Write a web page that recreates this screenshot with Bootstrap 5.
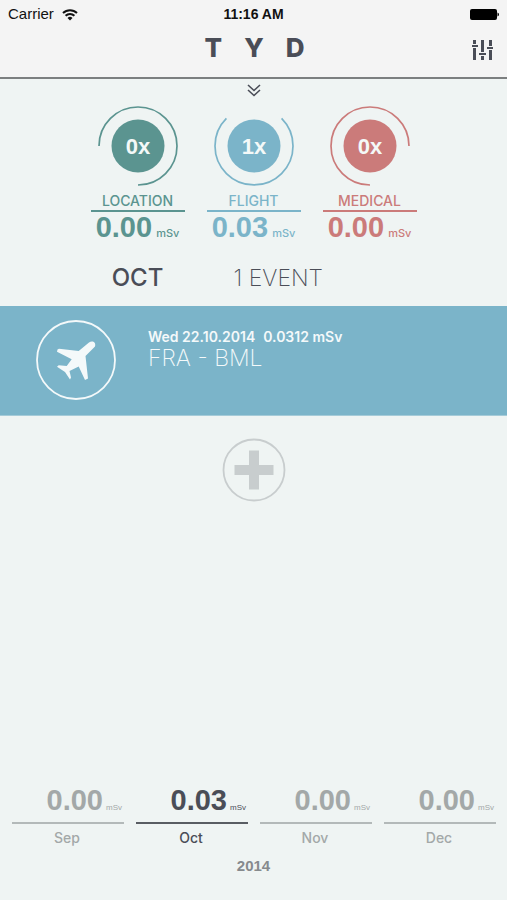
<!DOCTYPE html>
<html lang="en">
<head>
<meta charset="utf-8">
<meta name="viewport" content="width=device-width, initial-scale=1">
<title>TYD</title>
<link href="https://cdn.jsdelivr.net/npm/bootstrap@5.3.0/dist/css/bootstrap.min.css" rel="stylesheet">
<style>
:root { --ink: #4a4d57; --green: #5b9490; --blue: #7bb4c9; --red: #cb7b7a; --idle: #a3a8a8; }
body { background: #eff4f3; color: var(--ink); font-family: "Liberation Sans", Arial, sans-serif; }
svg { display: block; }
.top-area { background: #f4f4f4; border-bottom: 2px solid #7c7f80; height: 79px; }
.status { height: 28px; font-size: 14px; line-height: 28px; color: #111; }
.status-side { flex: 1 1 0; }
.carrier { font-size: 15px; }
.brand { font: 800 26px/40px Inter, sans-serif; gap: 22px; padding-left: 2px; }
.icon-btn { background: none; border: 0; padding: 0; color: var(--ink); }
.head-side { flex: 1 1 0; padding-right: 14px; padding-top: 3px; }
.more-btn { margin: 5px auto 0; display: block; }
.gauges { gap: 22px; margin-top: 9px; }
.gauge { width: 94px; background: none; border: 0; padding: 0; color: var(--tone); }
.tone-green { --tone: var(--green); }
.tone-blue { --tone: var(--blue); }
.tone-red { --tone: var(--red); }
.gauge-label, .month-label { font-family: Inter, sans-serif; font-weight: 500; font-size: 14px; }
.gauge-label { line-height: 16px; margin-top: 7px; padding-bottom: 1px; border-bottom: 2px solid var(--tone); }
.dose { font-size: 29px; line-height: 30px; font-weight: 700; }
.unit { font-size: 11px; font-weight: 400; }
.gauge .unit { margin-left: 4px; font-family: Inter, sans-serif; font-weight: 500; }
.summary { gap: 22px; margin-top: 11px; padding-bottom: 9px; line-height: 38px; }
.month-name { width: 94px; font-family: Inter, sans-serif; font-weight: 500; font-size: 24px; }
.event-count { width: 210px; padding-left: 27px; }
.thin { font-family: Inter, sans-serif; font-weight: 200; font-size: 23px; }
.event { background: var(--blue); color: #f4f9fa; height: 110px; padding: 14px 36px; gap: 32px; border: 0; border-bottom: 1px solid #a5cbd8; }
.event-info { padding-top: 8px; }
.event-meta { font-family: Inter, sans-serif; font-size: 14px; line-height: 18px; font-weight: 600; gap: 8px; }
.event .thin { line-height: 24px; }
.add-btn { display: block; margin: 22px auto 0; }
.months { gap: 12px; padding: 0 11px 0 12px; }
.month { flex: 1 1 0; background: none; border: 0; padding: 0; color: var(--idle); }
.month .dose { border-bottom: 2px solid #b3b9b9; padding: 0 2px 0 0; text-align: right; line-height: 28px; }
.month .unit { font-size: 8px; margin-left: 3px; }
.month-label { line-height: 28px; }
.month .month-label { padding-right: 2px; }
.month.current { color: var(--ink); }
.month.current .dose { border-color: #595d63; }
.year { font-size: 15px; line-height: 28px; font-weight: 700; color: #868a8d; padding-bottom: 20px; }
</style>
</head>
<body class="min-vh-100 d-flex flex-column">
<header class="top-area">
  <div class="status d-flex px-2">
    <div class="status-side d-flex align-items-center gap-2">
      <span class="carrier">Carrier</span>
      <svg width="16" height="13" viewBox="0 0 16 13" fill="none" stroke="#111" stroke-width="2"><path d="M1 5a10 10 0 0 1 14 0M3.600 7.800a6.200 6.200 0 0 1 8.800 0"/><path d="M8 12.500 5.500 10a3.500 3.500 0 0 1 5 0z" fill="#111" stroke="none"/></svg>
    </div>
    <strong>11:16 AM</strong>
    <div class="status-side d-flex align-items-center justify-content-end">
      <svg width="30" height="13" viewBox="0 0 30 13"><rect x="1" y="1" width="27" height="11" rx="2"/><path d="M28.500 4.500q1.500 .5 1.500 2t-1.500 2z"/></svg>
    </div>
  </div>
  <div class="d-flex">
    <div class="head-side"></div>
    <h1 class="brand d-flex m-0"><span>T</span><span>Y</span><span>D</span></h1>
    <div class="head-side d-flex align-items-center justify-content-end">
      <button class="icon-btn" type="button" aria-label="Settings">
        <svg width="21" height="20" viewBox="0 0 21 20" fill="currentColor"><path d="M1 0h3v4H1zM0 5h6v2H0zM1 8h3v12H1zM9 0h3v12H9zM7 13h7v2H7zM9 16h3v4H9zM17 0h3v6h-3zM15 7h6v2h-6zM17 10h3v10h-3z"/></svg>
      </button>
    </div>
  </div>
</header>
<main class="flex-grow-1">
  <button class="icon-btn more-btn" type="button" aria-label="Show more">
    <svg width="14" height="13" viewBox="0 0 14 13" fill="none" stroke="currentColor" stroke-width="1.600"><path d="M1 1l6 5.500L13 1M1 6l6 5.500L13 6"/></svg>
  </button>
  <section class="gauges d-flex justify-content-center">
    <button class="gauge tone-green" type="button">
      <svg class="mx-auto" width="80" height="80" viewBox="0 0 80 80"><path d="M1 40A39 39 0 1 1 40 79" fill="none" stroke="currentColor" stroke-width="1.700"/><circle cx="40" cy="40" r="26.500" fill="currentColor"/><text x="40" y="48" text-anchor="middle" font-size="22" font-weight="700" fill="#f4f9f8">0x</text></svg>
      <div class="gauge-label">LOCATION</div>
      <div class="dose">0.00<span class="unit">mSv</span></div>
    </button>
    <button class="gauge tone-blue" type="button">
      <svg class="mx-auto" width="80" height="80" viewBox="0 0 80 80"><path d="M12.400 12.400A39 39 0 1 0 67.600 12.400" fill="none" stroke="currentColor" stroke-width="1.700"/><circle cx="40" cy="40" r="26.500" fill="currentColor"/><text x="40" y="48" text-anchor="middle" font-size="22" font-weight="700" fill="#f4f9f8">1x</text></svg>
      <div class="gauge-label">FLIGHT</div>
      <div class="dose">0.03<span class="unit">mSv</span></div>
    </button>
    <button class="gauge tone-red" type="button">
      <svg class="mx-auto" width="80" height="80" viewBox="0 0 80 80"><path d="M79 40A39 39 0 1 0 40 79" fill="none" stroke="currentColor" stroke-width="1.700"/><circle cx="40" cy="40" r="26.500" fill="currentColor"/><text x="40" y="48" text-anchor="middle" font-size="22" font-weight="700" fill="#f4f9f8">0x</text></svg>
      <div class="gauge-label">MEDICAL</div>
      <div class="dose">0.00<span class="unit">mSv</span></div>
    </button>
  </section>
  <div class="summary d-flex justify-content-center">
    <div class="month-name text-center">OCT</div>
    <div class="event-count thin">1 EVENT</div>
  </div>
  <button class="event d-flex w-100 text-start" type="button">
    <svg width="80" height="80" viewBox="0 0 80 80"><circle cx="40" cy="40" r="39" fill="none" stroke="currentColor" stroke-width="1.800"/><path fill="currentColor" d="M53 22.500C56 20 60.500 22 59 26.500L49.500 36L52 58.500L49 60L42.700 46.500L33.500 51L35 57.500L34 59.500L29 52L21 46.700L22.700 45.300L30.700 46L35.700 39.300L21 31.700L21.500 29.500L23 28.700L42.700 31Z"/></svg>
    <span class="event-info">
      <span class="event-meta d-flex"><span>Wed 22.10.2014</span><span>0.0312 mSv</span></span>
      <span class="thin d-block">FRA - BML</span>
    </span>
  </button>
  <button class="icon-btn add-btn" type="button" aria-label="Add event">
    <svg width="64" height="64" viewBox="0 0 64 64"><circle cx="32" cy="32" r="30.500" fill="none" stroke="#c8cdce" stroke-width="1.800"/><path fill="#c8cdce" d="M27 12.500h10v14.500h14.500v10H37v14.500H27V37H12.500V27H27z"/></svg>
  </button>
</main>
<footer>
  <div class="months d-flex">
    <button class="month" type="button"><div class="dose">0.00<span class="unit">mSv</span></div><div class="month-label">Sep</div></button>
    <button class="month current" type="button"><div class="dose">0.03<span class="unit">mSv</span></div><div class="month-label">Oct</div></button>
    <button class="month" type="button"><div class="dose">0.00<span class="unit">mSv</span></div><div class="month-label">Nov</div></button>
    <button class="month" type="button"><div class="dose">0.00<span class="unit">mSv</span></div><div class="month-label">Dec</div></button>
  </div>
  <div class="year text-center">2014</div>
</footer>
<script src="https://cdn.jsdelivr.net/npm/bootstrap@5.3.0/dist/js/bootstrap.bundle.min.js"></script>
</body>
</html>
